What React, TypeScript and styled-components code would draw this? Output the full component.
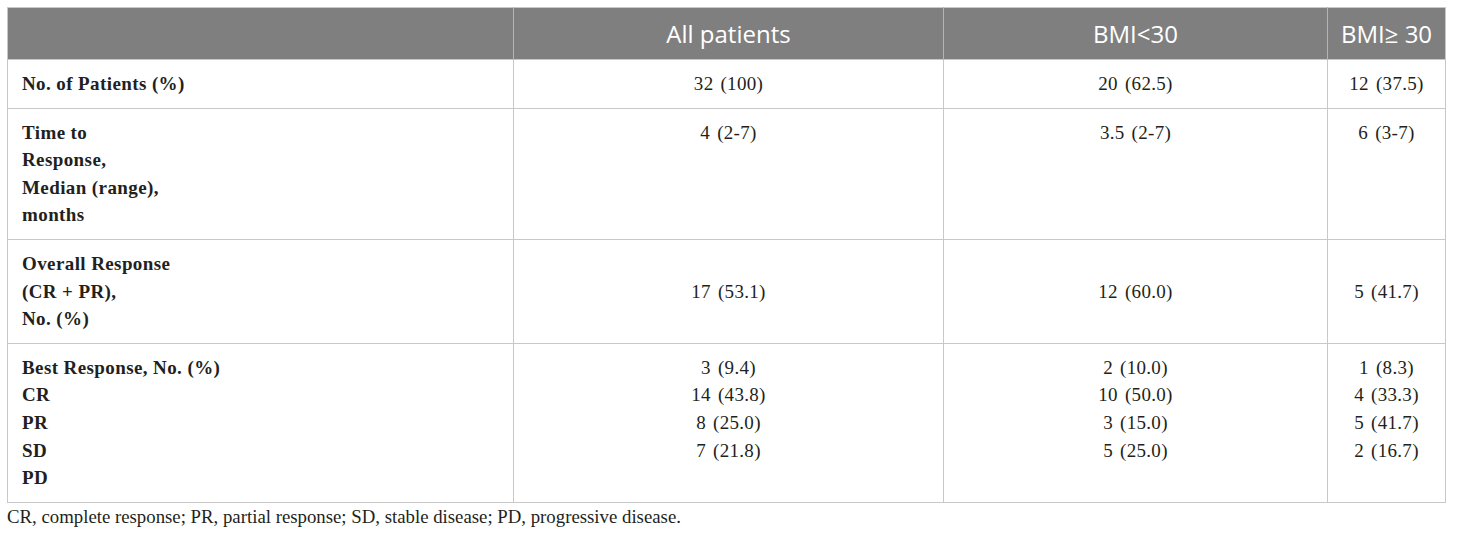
import React from "react";
import styled, { createGlobalStyle } from "styled-components";

const GlobalStyle = createGlobalStyle`
  html, body { margin: 0; padding: 0; background: #ffffff; }
  body { font-family: "Liberation Serif", "Times New Roman", serif; color: #231f20; }
  * { box-sizing: border-box; }
`;

const Page = styled.div`
  padding: 7px 15px 0 7px;
  width: 1460px;
`;

const Table = styled.table`
  width: 1438px;
  border-collapse: collapse;
  table-layout: fixed;
  border: 1px solid #c8c8c8;
`;

const HeadRow = styled.tr`
  background: #7f7f7f;
  height: 52px;
`;

const HeadCell = styled.th`
  font-family: "Open Sans", "Noto Sans", sans-serif;
  font-weight: 400;
  font-size: 24px;
  line-height: 30px;
  color: #ffffff;
  text-align: center;
  vertical-align: middle;
  padding: 0 8px;
  border-left: 1px solid #b4b4b4;
  &:first-child { border-left: none; }
`;

const BodyRow = styled.tr`
  border-top: 1px solid #c8c8c8;
`;

const LabelCell = styled.td`
  font-family: "Liberation Serif", "Times New Roman", serif;
  font-weight: 700;
  font-size: 19px;
  letter-spacing: 0.4px;
  line-height: 27.6px;
  text-align: left;
  vertical-align: top;
  padding: 10px 14px 10px 14px;
  border-right: 1px solid #c8c8c8;
`;

const ValueCell = styled.td<{ $valign?: "top" | "middle" }>`
  font-family: "Liberation Serif", "Times New Roman", serif;
  font-size: 19px;
  letter-spacing: 0.3px;
  line-height: 27.6px;
  text-align: center;
  vertical-align: ${(p) => p.$valign ?? "top"};
  padding: 10px 8px;
  border-left: 1px solid #c8c8c8;
  word-spacing: 2px;
`;

const Footnote = styled.p`
  margin: 0;
  padding-top: 0;
  font-family: "Liberation Serif", "Times New Roman", serif;
  font-size: 18.8px;
  line-height: 27px;
  color: #231f20;
`;

type Row = {
  label: string[];
  values: string[][];
  valign?: "top" | "middle";
};

const rows: Row[] = [
  {
    label: ["No. of Patients (%)"],
    values: [["32 (100)"], ["20 (62.5)"], ["12 (37.5)"]],
  },
  {
    label: ["Time to", "Response,", "Median (range),", "months"],
    values: [["4 (2-7)"], ["3.5 (2-7)"], ["6 (3-7)"]],
  },
  {
    label: ["Overall Response", "(CR + PR),", "No. (%)"],
    values: [["17 (53.1)"], ["12 (60.0)"], ["5 (41.7)"]],
    valign: "middle",
  },
  {
    label: ["Best Response, No. (%)", "CR", "PR", "SD", "PD"],
    values: [
      ["3 (9.4)", "14 (43.8)", "8 (25.0)", "7 (21.8)"],
      ["2 (10.0)", "10 (50.0)", "3 (15.0)", "5 (25.0)"],
      ["1 (8.3)", "4 (33.3)", "5 (41.7)", "2 (16.7)"],
    ],
  },
];

const Lines = ({ lines }: { lines: string[] }) => (
  <>
    {lines.map((l, i) => (
      <React.Fragment key={i}>
        {i > 0 && <br />}
        {l}
      </React.Fragment>
    ))}
  </>
);

export default function App() {
  return (
    <Page>
      <GlobalStyle />
      <Table>
        <colgroup>
          <col style={{ width: 506 }} />
          <col style={{ width: 430 }} />
          <col style={{ width: 384 }} />
          <col style={{ width: 118 }} />
        </colgroup>
        <thead>
          <HeadRow>
            <HeadCell></HeadCell>
            <HeadCell>All patients</HeadCell>
            <HeadCell>BMI&lt;30</HeadCell>
            <HeadCell>BMI≥ 30</HeadCell>
          </HeadRow>
        </thead>
        <tbody>
          {rows.map((r, i) => (
            <BodyRow key={i}>
              <LabelCell>
                <Lines lines={r.label} />
              </LabelCell>
              {r.values.map((v, j) => (
                <ValueCell key={j} $valign={r.valign}>
                  <Lines lines={v} />
                </ValueCell>
              ))}
            </BodyRow>
          ))}
        </tbody>
      </Table>
      <Footnote>
        CR, complete response; PR, partial response; SD, stable disease; PD, progressive disease.
      </Footnote>
    </Page>
  );
}
